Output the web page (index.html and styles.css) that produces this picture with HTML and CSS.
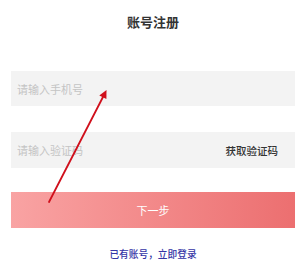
FILE: index.html
```html
<!DOCTYPE html>
<html lang="zh-CN">
<head>
    <meta charset="UTF-8">
    <meta name="viewport" content="width=device-width, initial-scale=1.0">
    <title>账号注册</title>
    <link rel="stylesheet" href="styles.css">
</head>
<body>
    <div class="page">
        <h1 class="title">账号注册</h1>

        <div class="form">
            <div class="field">
                <input class="field-input" type="text" placeholder="请输入手机号">
            </div>
            <div class="field field-code">
                <input class="field-input" type="text" placeholder="请输入验证码">
                <span class="get-code">获取验证码</span>
            </div>
            <button class="next">下一步</button>
            <a class="login-link" href="#">已有账号，立即登录</a>
        </div>

        <!-- annotation arrow drawn over the form -->
        <svg class="arrow" width="306" height="270" viewBox="0 0 306 270">
            <line x1="49" y1="202" x2="103.5" y2="96" stroke="#d0101c" stroke-width="1.8" stroke-linecap="round"/>
            <polygon points="106.5,90 106.4,99 99.3,95.4" fill="#d0101c"/>
        </svg>
    </div>
</body>
</html>
```

FILE: styles.css
```css
body {
    margin: 0;
    background: #fff;
    font-family: "Noto Sans CJK SC", "Noto Sans", sans-serif;
}
.page {
    position: relative;
    width: 306px;
    height: 270px;
    overflow: hidden;
}
.title {
    margin: 0;
    height: 44px;
    line-height: 44px;
    text-align: center;
    font-size: 13px;
    font-weight: bold;
    color: #333;
}
.form {
    display: flex;
    flex-direction: column;
    padding: 27px 11px 0;
}
.field {
    display: flex;
    align-items: center;
    height: 35px;
    background: #f3f3f3;
}
.field-code {
    height: 36px;
    margin-top: 26px;
}
.field-input {
    flex: 1;
    min-width: 0;
    border: none;
    outline: none;
    background: transparent;
    padding: 0 0 0 6px;
    font-family: inherit;
    font-size: 11px;
    color: #333;
}
.field-input::placeholder {
    color: #c4c4c4;
}
.get-code {
    padding-right: 17px;
    font-size: 10.5px;
    font-weight: 500;
    color: #333;
}
.next {
    margin-top: 24px;
    height: 36px;
    border: none;
    background: linear-gradient(90deg, #f9a3a3, #ec6f70);
    color: #fff;
    font-family: inherit;
    font-size: 11px;
    cursor: pointer;
}
.login-link {
    margin-top: 18px;
    line-height: 16px;
    text-align: center;
    font-size: 9.7px;
    font-weight: 500;
    color: #3535a6;
    text-decoration: none;
}
.arrow {
    position: absolute;
    top: 0;
    left: 0;
    pointer-events: none;
}
```
